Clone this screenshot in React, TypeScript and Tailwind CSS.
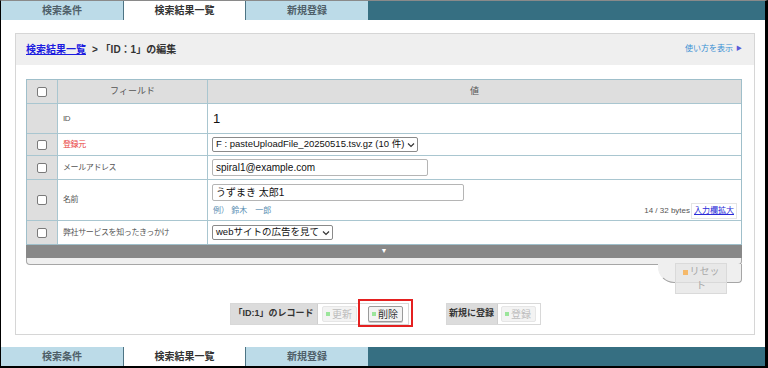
const font = "font-['Liberation_Sans','Noto_Sans_CJK_JP',sans-serif]";

function Tabs() {
  return (
    <div className="flex h-[19px] shrink-0 text-[10px] font-bold">
      <div className="w-[122px] flex items-center justify-center bg-[#bcdbe8] text-[#4f5f69]">検索条件</div>
      <div className="w-[123px] flex items-center justify-center bg-white text-[#333] border-x border-[#4d7484]">検索結果一覧</div>
      <div className="w-[122px] flex items-center justify-center bg-[#bcdbe8] text-[#4f5f69]">新規登録</div>
      <div className="flex-1 bg-[#366f82]" />
    </div>
  );
}

function Check() {
  return <span className="block w-[10px] h-[10px] rounded-[2px] border border-[#7a7a7a] bg-white" />;
}

function Row({ h, check = true, label, red, children }: { h: string; check?: boolean; label: string; red?: boolean; children?: React.ReactNode }) {
  return (
    <div className={`flex border-t border-[#a9c6d0] ${h}`}>
      <div className="w-[31px] shrink-0 bg-[#dedede] border-r border-[#a9c6d0] flex items-center justify-center">
        {check && <Check />}
      </div>
      <div className={`w-[150px] shrink-0 border-r border-[#a9c6d0] flex items-center pl-[5px] text-[8px] tracking-[-0.4px] ${red ? "text-[#e8403c]" : "text-[#555]"}`}>
        {label}
      </div>
      <div className="flex-1 min-w-0 bg-white">{children}</div>
    </div>
  );
}

function Select({ text }: { text: string }) {
  return (
    <div className="w-fit h-[15px] flex items-center border border-[#8a8a8a] rounded-[2px] bg-white pl-[3px] pr-[2px] text-[9.5px] text-[#111] whitespace-nowrap">
      <span>{text}</span>
      <svg width="8" height="6" viewBox="0 0 8 6" className="ml-[3px] shrink-0">
        <path d="M1 1.5 L4 4.5 L7 1.5" fill="none" stroke="#333" strokeWidth="1.2" />
      </svg>
    </div>
  );
}

function Btn({ label, active }: { label: string; active?: boolean }) {
  return (
    <div
      className={`w-[35px] h-[16px] flex items-center justify-center gap-[2px] rounded-[2px] border text-[10px] ${
        active ? "bg-[#f3f3f3] border-[#9a9a9a] text-[#333] shadow-[0_1px_0_#ccc]" : "bg-[#f3f3f3] border-[#e6e6e6] text-[#bdbdbd]"
      }`}
    >
      <span className="w-[4px] h-[4px] bg-[#9be59b]" />
      {label}
    </div>
  );
}

export default function App() {
  return (
    <div className={`${font} w-[768px] h-[368px] bg-white flex flex-col border-t border-t-[#8a8a8a] border-l border-r-[3px] border-b-2 border-black overflow-hidden`}>
      <Tabs />
      <div className="flex-1 pt-[13px] pb-[12px] pl-[14px] pr-[10px]">
        <div className="h-full border border-[#d6d6d6] flex flex-col">
          <div className="h-[31px] shrink-0 bg-[#efefef] flex items-center justify-between pl-[10px] pr-[12px]">
            <div className="text-[10px] font-bold text-[#333]">
              <span className="text-[#1c1ce0] underline">検索結果一覧</span>
              <span className="ml-[6px]">&gt; 「ID：1」の編集</span>
            </div>
            <div className="flex items-center gap-[3px] text-[8px] text-[#3a8fd4] -mt-[2px]">
              使い方を表示
              <span className="text-[6px] text-[#5a5ad8]">▶</span>
            </div>
          </div>

          <div className="mt-[14px] ml-[10px] mr-[12px]">
            <div className="border-x border-b border-[#9fbfca]">
              <div className="flex h-[24px] bg-[#dedede] border-t border-[#9fbfca] text-[9px] text-[#555]">
                <div className="w-[31px] shrink-0 border-r border-[#a9c6d0] flex items-center justify-center">
                  <Check />
                </div>
                <div className="w-[150px] shrink-0 border-r border-[#a9c6d0] flex items-center justify-center">フィールド</div>
                <div className="flex-1 flex items-center justify-center">値</div>
              </div>
              <Row h="h-[30px]" check={false} label="ID">
                <div className="h-full flex items-center pl-[5px] text-[13px] text-[#111]">1</div>
              </Row>
              <Row h="h-[22px]" label="登録元" red>
                <div className="h-full flex items-center pl-[4px]">
                  <Select text="F : pasteUploadFile_20250515.tsv.gz (10 件)" />
                </div>
              </Row>
              <Row h="h-[24px]" label="メールアドレス">
                <div className="h-full flex items-center pl-[4px]">
                  <div className="w-[216px] h-[17px] flex items-center border border-[#b5b5b5] rounded-[2px] pl-[3px] text-[10px] text-[#111]">
                    spiral1@example.com
                  </div>
                </div>
              </Row>
              <Row h="h-[41px]" label="名前">
                <div className="h-full flex flex-col pl-[4px] pr-[4px] pt-[4px]">
                  <div className="w-[252px] h-[17px] flex items-center border border-[#b5b5b5] rounded-[2px] pl-[3px] text-[10px] text-[#111]">
                    うずまき 太郎1
                  </div>
                  <div className="flex items-center justify-between mt-[2px]">
                    <span className="text-[8px] text-[#5b8fb3] pl-[1px]">例）&nbsp;鈴木　一郎</span>
                    <div className="flex items-center text-[8px] text-[#555]">
                      14 / 32 bytes
                      <span className="ml-[1px] px-[2px] py-[1px] border border-[#e4e4e4] text-[#2a2ad8] underline">入力欄拡大</span>
                    </div>
                  </div>
                </div>
              </Row>
              <Row h="h-[24px]" label="弊社サービスを知ったきっかけ">
                <div className="h-full flex items-center pl-[4px]">
                  <Select text="webサイトの広告を見て" />
                </div>
              </Row>
            </div>
            <div className="h-[13px] bg-[#888] flex items-center justify-center text-[7px] text-white">▼</div>
            <div className="relative">
              <div className="h-[7px] bg-[#efefef] border-x border-b border-[#a6a6a6] rounded-b-[4px]" />
              <div className="absolute right-0 top-[6px] w-[84px] h-[19px] bg-[#efefef] border-l border-r border-b border-[#a6a6a6] border-l-[#efefef] rounded-br-[4px] rounded-bl-[16px]" />
              <div className="absolute right-[15px] top-[5px] w-[52px] h-[31px] bg-[#e6e6e6]/80 border border-[#dadada] px-[3px] pt-[1px] text-[10px] leading-[14px] text-[#a8a8a8] text-center">
                <span className="inline-block w-[5px] h-[5px] bg-[#f5b96a] mr-[2px] align-middle" />
                リセット
              </div>
            </div>
          </div>

          <div className="mt-[38px] flex justify-center items-center gap-[37px]">
            <div className="flex items-center h-[22px] border border-[#d8d8d8]">
              <div className="h-full w-[87px] flex items-center justify-center bg-[#dcdcdc] border-r border-[#cfcfcf] text-[9px] font-bold text-[#333]">
                「ID:1」のレコード
              </div>
              <div className="ml-[4px]">
                <Btn label="更新" />
              </div>
              <div className="relative ml-[11px] mr-[5px]">
                <Btn label="削除" active />
                <div className="absolute -left-[10px] -right-[10px] -top-[7px] -bottom-[5px] border-2 border-[#e42020]" />
              </div>
            </div>
            <div className="flex items-center h-[22px] border border-[#d8d8d8]">
              <div className="h-full w-[51px] flex items-center justify-center bg-[#dcdcdc] border-r border-[#cfcfcf] text-[9px] font-bold text-[#333]">
                新規に登録
              </div>
              <div className="ml-[3px] mr-[4px]">
                <Btn label="登録" />
              </div>
            </div>
          </div>
        </div>
      </div>
      <Tabs />
    </div>
  );
}
